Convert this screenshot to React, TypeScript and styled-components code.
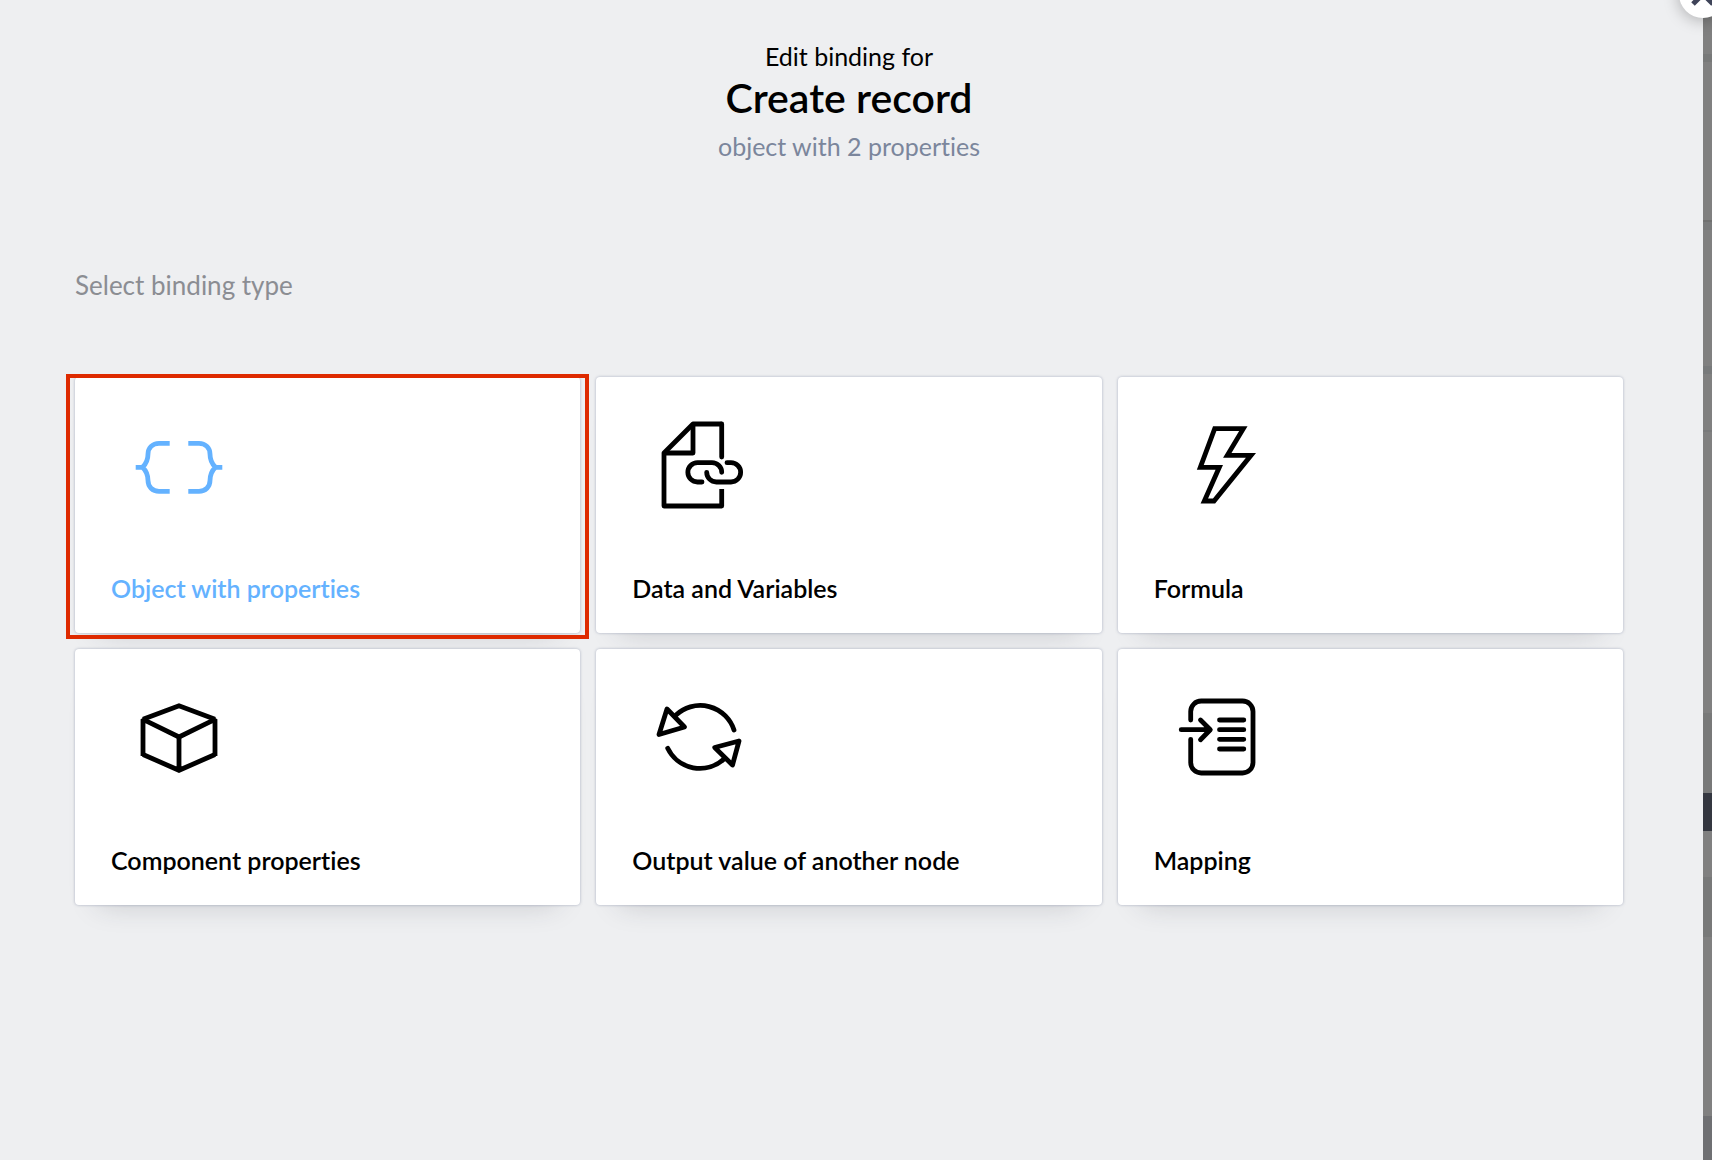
import React from "react";
import styled, { createGlobalStyle } from "styled-components";

const GlobalStyle = createGlobalStyle`
  *, *::before, *::after { box-sizing: border-box; }
  body {
    margin: 0;
    background: #eeeff1;
    font-family: Lato, "Open Sans", "Liberation Sans", sans-serif;
    font-variant-ligatures: none;
    color: #000;
  }
`;

const Screen = styled.div`
  display: flex;
  min-height: 100vh;
  overflow: hidden;
`;

const Panel = styled.main`
  position: relative;
  flex: 1;
  min-width: 0;
  padding: 40px 80px 80px 75px;
  background: #eeeff1;
`;

const Header = styled.header`
  display: flex;
  flex-direction: column;
  align-items: center;
  text-align: center;
`;

const Eyebrow = styled.p`
  margin: 0;
  font-size: 25px;
  line-height: 32px;
`;

const Title = styled.h1`
  margin: 0;
  font-size: 41px;
  font-weight: 600;
  line-height: 52px;
`;

const Summary = styled.p`
  margin: 6px 0 0;
  font-size: 25px;
  line-height: 32px;
  color: #7b869c;
`;

const SectionLabel = styled.h2`
  margin: 107px 0 76px;
  font-size: 26px;
  font-weight: 400;
  line-height: 32px;
  color: #8b8d93;
`;

const Grid = styled.div`
  display: grid;
  grid-template-columns: repeat(3, 1fr);
  gap: 16px;
`;

const Card = styled.button<{ $active?: boolean }>`
  position: relative;
  display: flex;
  flex-direction: column;
  justify-content: space-between;
  align-items: flex-start;
  height: 256px;
  padding: 42px 36px 29px;
  border: 0;
  border-radius: 4px;
  background: #fff;
  box-shadow: 0 0 3px rgba(70, 80, 120, 0.4), 0 22px 28px -24px rgba(40, 45, 60, 0.22);
  color: ${(p) => (p.$active ? "#64b2ff" : "#000")};
  font: inherit;
  font-variant-ligatures: none;
  text-align: left;
  cursor: pointer;

  &::after {
    content: ${(p) => (p.$active ? '""' : "none")};
    position: absolute;
    inset: -3px -9px -6px;
    border: 4px solid #de2a00;
    z-index: 1;
  }
`;

const CardIcon = styled.svg`
  width: 96px;
  height: 96px;
  margin-left: 20px;
  fill: none;
  stroke: currentColor;
  stroke-width: 4.8;
`;

const CardLabel = styled.span`
  font-size: 25px;
  font-weight: 600;
  line-height: 32px;
`;

const CloseButton = styled.button`
  position: absolute;
  top: -30px;
  right: -24px;
  z-index: 2;
  display: flex;
  align-items: center;
  justify-content: center;
  width: 48px;
  height: 48px;
  padding: 0;
  border: 0;
  border-radius: 50%;
  background: #fff;
  box-shadow: 0 2px 16px rgba(0, 0, 0, 0.28);
  color: #3f4459;
`;

const Backdrop = styled.div`
  display: flex;
  flex-direction: column;
  width: 9px;
  background: #6f7073;
`;

const Band = styled.div<{ $height: number; $color: string }>`
  flex: none;
  height: ${(p) => p.$height}px;
  background: ${(p) => p.$color};
`;

const bands: [number, string][] = [
  [54, "#808080"],
  [8, "#787979"],
  [158, "#808080"],
  [2, "#707070"],
  [8, "#797a7b"],
  [136, "#808080"],
  [8, "#787a7b"],
  [56, "#808080"],
  [2, "#797a7b"],
  [281, "#808080"],
  [80, "#787979"],
  [38, "#343740"],
  [46, "#808080"],
  [60, "#787979"],
  [179, "#808080"],
];

const BracesIcon = () => (
  <CardIcon viewBox="0 0 96 96" aria-hidden="true">
    <path d="M38.7 24.3H28C21.5 24.3 17 29 17 35C17 41 15 45 11.5 48.3C15 51.6 17 55.6 17 61.6C17 67.6 21.5 72.3 28 72.3H38.7M4.7 48.3H12" />
    <path d="M57.3 24.3H68C74.5 24.3 79 29 79 35C79 41 81 45 84.5 48.3C81 51.6 79 55.6 79 61.6C79 67.6 74.5 72.3 68 72.3H57.3M91.3 48.3H84" />
  </CardIcon>
);

const DocumentLinkIcon = () => (
  <CardIcon viewBox="0 0 96 96" aria-hidden="true" strokeLinejoin="round">
    <path d="M69.7 70V87H12V34L41 5H69.7" />
    <path d="M69.7 5V38" strokeLinecap="round" />
    <path d="M12 34H41V5" />
    <path
      strokeLinecap="round"
      d="M50 63H45.5A9.65 9.65 0 0 1 45.5 43.7H60A9.7 9.6 0 0 1 69.7 53.3"
    />
    <path
      strokeLinecap="round"
      d="M54.7 53.3A9.7 9.7 0 0 0 64.4 63H79A9.65 9.65 0 0 0 79 43.7H75"
    />
  </CardIcon>
);

const BoltIcon = () => (
  <CardIcon viewBox="0 0 96 96" aria-hidden="true">
    <path d="M40.7 9.7H69.3L53.3 36.3H77L40 82H30.3L45.3 48.3H26.3Z" />
  </CardIcon>
);

const CubeIcon = () => (
  <CardIcon viewBox="0 0 96 96" aria-hidden="true">
    <path d="M12 65V28.3L48 46L84 28.3V65" strokeLinejoin="bevel" />
    <path d="M12 28.3L48 14.7L84 28.3M12 63.5L48 79.3L84 63.5M48 46V79" />
  </CardIcon>
);

const CycleIcon = () => (
  <CardIcon viewBox="0 0 96 96" aria-hidden="true" strokeLinecap="round" strokeLinejoin="round">
    <path d="M15 18L32.5 36L7 43.5Z" />
    <path d="M24 24A35.5 35.5 0 0 1 82 39" />
    <path d="M87 50L62.7 56.5L80.5 74Z" />
    <path d="M15.7 57.3A35.7 35.7 0 0 0 72 68" />
  </CardIcon>
);

const MappingIcon = () => (
  <CardIcon viewBox="0 0 96 96" aria-hidden="true" strokeLinecap="round" strokeLinejoin="round">
    <path d="M16.7 29V20.5A10.5 10.5 0 0 1 27.2 10H68.5A10.5 10.5 0 0 1 79 20.5V71.5A10.5 10.5 0 0 1 68.5 82H27.2A10.5 10.5 0 0 1 16.7 71.5V48.3" />
    <path d="M7.2 38.7H36M26.5 29L36.3 38.7L26.5 48.7" />
    <path d="M33 36.5L35.5 38.7L33 41Z" />
    <path d="M45.5 29H69.8M45.5 38.7H69.8M45.5 48.3H69.8M45.5 58H69.8" />
  </CardIcon>
);

const options = [
  { label: "Object with properties", Icon: BracesIcon, active: true },
  { label: "Data and Variables", Icon: DocumentLinkIcon },
  { label: "Formula", Icon: BoltIcon },
  { label: "Component properties", Icon: CubeIcon },
  { label: "Output value of another node", Icon: CycleIcon },
  { label: "Mapping", Icon: MappingIcon },
];

export default function App() {
  return (
    <>
      <GlobalStyle />
      <Screen>
        <Panel>
          <CloseButton type="button" aria-label="Close">
            <svg width="24" height="24" viewBox="0 0 24 24" stroke="currentColor" strokeWidth="5">
              <path d="M2 2L22 22M22 2L2 22" />
            </svg>
          </CloseButton>
          <Header>
            <Eyebrow>Edit binding for</Eyebrow>
            <Title>Create record</Title>
            <Summary>object with 2 properties</Summary>
          </Header>
          <SectionLabel>Select binding type</SectionLabel>
          <Grid>
            {options.map(({ label, Icon, active }) => (
              <Card key={label} type="button" $active={active}>
                <Icon />
                <CardLabel>{label}</CardLabel>
              </Card>
            ))}
          </Grid>
        </Panel>
        <Backdrop>
          {bands.map(([height, color], i) => (
            <Band key={i} $height={height} $color={color} />
          ))}
        </Backdrop>
      </Screen>
    </>
  );
}
